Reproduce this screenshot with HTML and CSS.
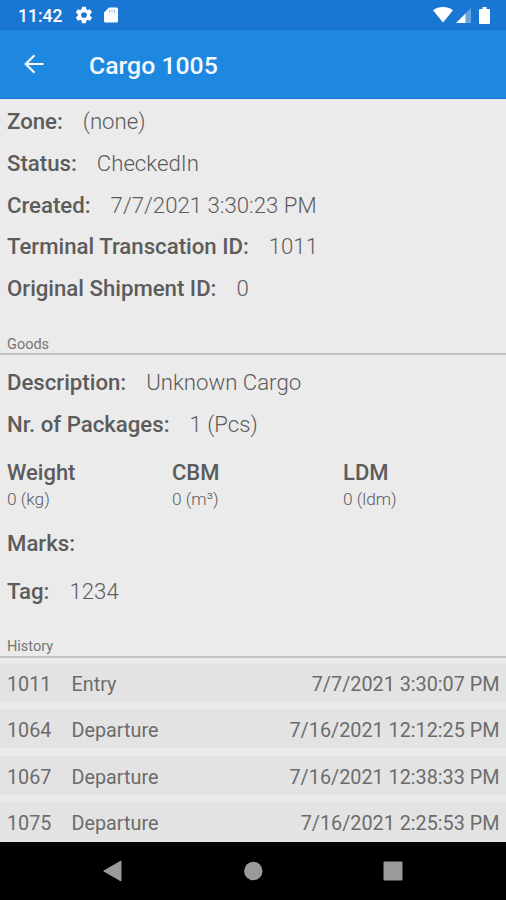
FILE: index.html
```html
<!DOCTYPE html>
<html lang="en">
<head>
  <meta charset="UTF-8">
  <title>Cargo 1005</title>
  <meta name="viewport" content="width=device-width, initial-scale=1.0">
  <link rel="stylesheet" href="styles.css">
</head>
<body>
<div class="status-bar">
  <span class="clock">11:42</span>
  <svg class="gear" width="18" height="18" viewBox="1 1 22 22"><path fill="#fff" d="M19.400 13a7.500 7.500 0 0 0 0-2l2.100-1.600a.5.5 0 0 0 .1-.7l-2-3.400a.5.5 0 0 0-.6-.2l-2.500 1a7.300 7.300 0 0 0-1.700-1l-.4-2.600a.5.5 0 0 0-.5-.5h-4a.5.5 0 0 0-.5.5L9 5.100a7.300 7.300 0 0 0-1.700 1l-2.500-1a.5.5 0 0 0-.6.2l-2 3.400a.5.5 0 0 0 .1.7L4.500 11a7.500 7.500 0 0 0 0 2l-2.200 1.600a.5.5 0 0 0-.1.700l2 3.400c.1.200.4.300.6.200l2.500-1c.5.400 1.100.7 1.700 1l.4 2.600c0 .3.200.5.500.5h4c.3 0 .5-.2.500-.5l.4-2.600c.6-.3 1.200-.6 1.700-1l2.500 1c.2.100.5 0 .6-.2l2-3.400a.5.5 0 0 0-.1-.7zM12 15.500a3.500 3.500 0 1 1 0-7 3.500 3.500 0 0 1 0 7z"/></svg>
  <svg class="sd" width="14" height="16" viewBox="0 0 14 16"><path fill="#fff" d="M5 0.500h7.500a1.500 1.500 0 0 1 1.500 1.500v12a1.500 1.500 0 0 1-1.500 1.500h-11A1.500 1.500 0 0 1 0 14V5.500z"/><path stroke="#1976d2" stroke-opacity=".5" d="M5.500 2.500v3M8 2.500v3M10.500 2.500v3"/></svg>
  <svg class="wifi" width="20" height="16" viewBox="0 0 20 16"><path fill="#fff" d="M0 3.200C5.500-1 14.500-1 20 3.200L10 15.500z"/></svg>
  <svg class="signal" width="15" height="15" viewBox="0 0 15 15"><path fill="#fff" d="M0 15 9.500 5.500V15z"/><path fill="#fff" opacity=".35" d="M9.500 5.500 15 0v15H9.500z"/></svg>
  <svg class="battery" width="11" height="17" viewBox="0 0 11 17"><path fill="#fff" d="M3.500 0h4v2H10a1 1 0 0 1 1 1v13a1 1 0 0 1-1 1H1a1 1 0 0 1-1-1V3a1 1 0 0 1 1-1h2.500z"/></svg>
</div>

<div class="app-bar">
  <svg class="back" width="20" height="20" viewBox="0 0 20 20"><path fill="none" stroke="#f4f8fd" stroke-width="2.200" d="M19.500 10H2M10.500 1.200 1.700 10l8.800 8.800"/></svg>
  <h1>Cargo 1005</h1>
</div>

<div class="content">
  <div class="fields">
    <p><b>Zone:</b><span>(none)</span></p>
    <p><b>Status:</b><span>CheckedIn</span></p>
    <p><b>Created:</b><span>7/7/2021 3:30:23 PM</span></p>
    <p><b>Terminal Transcation ID:</b><span>1011</span></p>
    <p><b>Original Shipment ID:</b><span>0</span></p>
  </div>

  <h2 class="section">Goods</h2>
  <div class="fields goods">
    <p><b>Description:</b><span>Unknown Cargo</span></p>
    <p><b>Nr. of Packages:</b><span>1 (Pcs)</span></p>
  </div>
  <div class="measures">
    <div><b>Weight</b><span>0 (kg)</span></div>
    <div><b>CBM</b><span>0 (m³)</span></div>
    <div><b>LDM</b><span>0 (ldm)</span></div>
  </div>
  <div class="fields tags">
    <p><b>Marks:</b></p>
    <p><b>Tag:</b><span>1234</span></p>
  </div>

  <h2 class="section history-title">History</h2>
  <div class="history">
    <div class="row"><span class="id">1011</span><span>Entry</span><span class="date">7/7/2021 3:30:07 PM</span></div>
    <div class="row"><span class="id">1064</span><span>Departure</span><span class="date">7/16/2021 12:12:25 PM</span></div>
    <div class="row"><span class="id">1067</span><span>Departure</span><span class="date">7/16/2021 12:38:33 PM</span></div>
    <div class="row"><span class="id">1075</span><span>Departure</span><span class="date">7/16/2021 2:25:53 PM</span></div>
  </div>
</div>

<div class="nav-bar">
  <svg width="20" height="22" viewBox="0 0 20 22"><path fill="#9a9a9a" d="M18 1v20L.7 11z" stroke="#9a9a9a" stroke-linejoin="round"/></svg>
  <svg width="20" height="20" viewBox="0 0 20 20"><circle cx="10.300" cy="10" r="9.200" fill="#9a9a9a"/></svg>
  <svg width="20" height="20" viewBox="0 0 20 20"><rect x=".5" y=".5" width="19" height="19" rx="1" fill="#9a9a9a"/></svg>
</div>
</body>
</html>
```
FILE: styles.css
```css
* { box-sizing: border-box; margin: 0; padding: 0; }
body {
  width: 506px;
  height: 900px;
  overflow: hidden;
  display: flex;
  flex-direction: column;
  font-family: Roboto, sans-serif;
  background: #ebebeb;
  color: #5c5c5c;
}
svg { display: block; flex: none; }
b { font-weight: 500; }

.status-bar {
  height: 30px;
  display: flex;
  align-items: center;
  padding: 0 16px 0 18px;
  background: #1976d2;
  color: #fff;
}
.clock {
  width: 57px;
  font-size: 17.5px;
  font-weight: 500;
  line-height: 30px;
  padding-top: 1px;
}
.sd { margin-left: 11px; }
.wifi { margin-left: auto; }
.signal { margin-left: 3px; margin-top: 1px; }
.battery { margin-left: 8px; }

.app-bar {
  height: 69px;
  display: flex;
  align-items: center;
  padding: 0 24px;
  background: #1e88e0;
  border-bottom: 1px solid #1976d2;
  color: #f4f8fd;
}
.app-bar h1 {
  margin-left: 45px;
  padding-top: 2px;
  font-size: 24.8px;
  font-weight: 500;
}

.content {
  height: 743px;
  padding-top: 2px;
}
.fields p {
  display: flex;
  gap: 20px;
  height: 41.8px;
  line-height: 40px;
  padding-left: 7px;
  font-size: 22.2px;
}
.fields span { font-weight: 300; }
.section {
  height: 45px;
  padding: 26px 7px 0;
  border-bottom: 2px solid #c2c2c2;
  font-size: 14.5px;
  font-weight: 400;
  line-height: 17px;
  color: #757575;
}
.goods { padding-top: 7px; }
.measures {
  display: grid;
  grid-template-columns: 165px 171px auto;
  height: 74px;
  padding: 14px 7px 0;
}
.measures b, .measures span { display: block; }
.measures b {
  font-size: 22px;
  line-height: 26px;
}
.measures span {
  font-size: 17.3px;
  font-weight: 300;
  line-height: 26px;
}
.tags p { height: 48px; line-height: 46px; }
.history-title { height: 42px; padding-top: 22px; }

.history {
  display: flex;
  flex-direction: column;
  gap: 7.4px;
  padding-top: 5.5px;
}
.row {
  display: flex;
  height: 39px;
  padding: 0 6.500px 0 7px;
  background: #e3e3e3;
  font-size: 19.8px;
  line-height: 43px;
  color: #6c6c6c;
}
.id { width: 64.5px; }
.date { margin-left: auto; }

.nav-bar {
  flex: 1;
  display: flex;
  align-items: center;
  justify-content: space-between;
  padding: 0 103px;
  background: #000;
}
```
